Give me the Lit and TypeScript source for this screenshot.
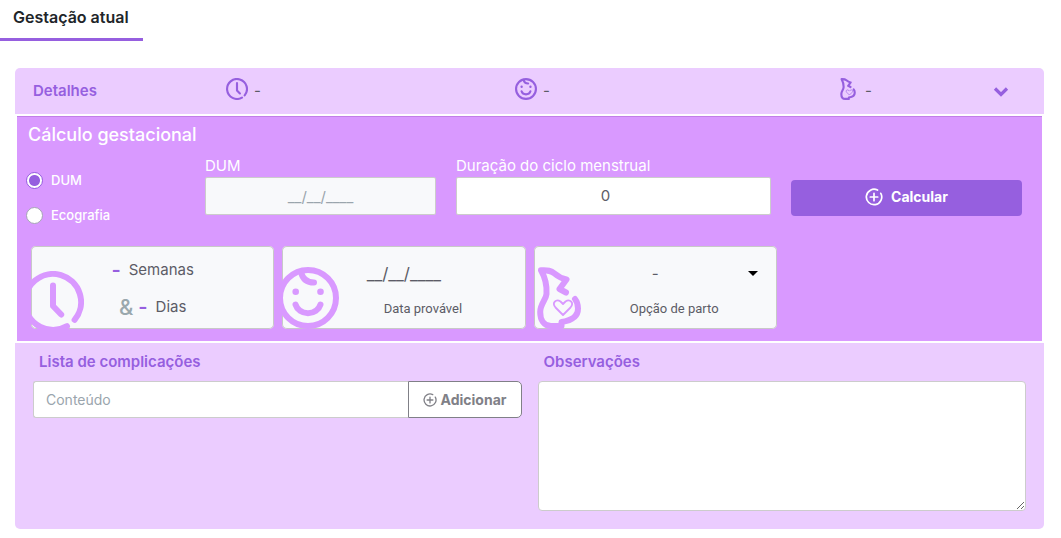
import { LitElement, html, css } from "lit";
import { customElement, state } from "lit/decorators.js";

const clockIcon = (cls: string) => html`<svg class=${cls} viewBox="0 0 62 62" aria-hidden="true">
  <g fill="none" stroke="currentColor" stroke-width="6" stroke-linecap="round" stroke-linejoin="round">
    <path d="M45 55.2A28 28 0 1 1 52.6 48.8" />
    <path d="M31 14.500V35L39.200 43.500" />
  </g>
</svg>`;

const babyIcon = (cls: string) => html`<svg class=${cls} viewBox="0 0 62 62" aria-hidden="true">
  <g fill="none" stroke="currentColor" stroke-width="6" stroke-linecap="round">
    <circle cx="31" cy="31" r="28" />
    <path d="M18.500 37.500a13 12 0 0 0 25 0" />
    <path d="M24 5C25.500 11.500 30 15.600 37 15.600" />
  </g>
  <circle cx="18.700" cy="24.700" r="3.300" fill="currentColor" />
  <circle cx="43.500" cy="24.700" r="3.300" fill="currentColor" />
</svg>`;

const bellyIcon = (cls: string) => html`<svg class=${cls} viewBox="0 0 44 62" aria-hidden="true">
  <g fill="none" stroke="currentColor" stroke-width="6" stroke-linecap="round" stroke-linejoin="round">
    <path d="M29 25.500L22.500 22L29.500 12.500C24 11.500 21 9.500 17.500 6.500C14 3.500 11 3 4 3.300C9 12 10 19 9.500 27C9 33 3.200 37 3.200 45C3.200 53 7 59 14 59H24.500V55C35 53.500 41 49 41 41.500C41 37.500 40 34.500 38 32" />
  </g>
  <path d="M26 48L18.500 40.500C14.500 36 19 31.500 23.500 34.500L26 37L28.500 34.500C33 31.500 37.500 36 33.500 40.500Z" fill="none" stroke="currentColor" stroke-width="1.800" stroke-linejoin="round" />
</svg>`;

const plusIcon = (cls: string) => html`<svg class=${cls} viewBox="0 0 18 18" aria-hidden="true">
  <path d="M15.800 5.300A7.700 7.700 0 1 1 12.500 2.100M9 5.300V12.700M5.300 9H12.700" fill="none" stroke="currentColor" stroke-width="1.700" stroke-linecap="round" />
</svg>`;

@customElement("app-root")
export class AppRoot extends LitElement {
  @state() private method = "dum";

  static styles = css`
    :host {
      display: block;
      font-family: Inter, "Liberation Sans", sans-serif;
      font-size: 15px;
      line-height: 20px;
      color: #5c5c66;
      background: #fff;
    }
    * { box-sizing: border-box; }
    input, select, button, textarea { font: inherit; color: inherit; margin: 0; }
    .tabs { display: flex; }
    .tab {
      padding: 7px 14px 11px 13px;
      border: 0;
      border-bottom: 3px solid #965fdf;
      background: none;
      color: #212529;
      font-size: 16px;
      font-weight: 600;
    }
    .panel { margin: 27px 17px 0 15px; }
    .summary {
      display: grid;
      grid-template-columns: 193fr 289fr 322fr 156fr 33fr;
      align-items: center;
      height: 46px;
      padding: 0 18px;
      background: #ebccff;
      border-radius: 5px 5px 0 0;
    }
    .heading { margin: 0; font-size: 15px; font-weight: 600; color: #965fdf; }
    .stat { display: flex; align-items: center; gap: 6px; }
    .stat-icon { width: 22px; height: 22px; color: #965fdf; margin-bottom: 4px; }
    .toggle { display: flex; padding: 0; border: 0; background: none; color: #965fdf; }
    .chevron { width: 16px; height: 11px; }
    .calc {
      margin: 2px;
      padding: 8px 13px 12px 9px;
      background: #d999ff;
      border-top: 1px solid #c17fe8;
      color: #fff;
    }
    .title { margin: 0 2px; font-size: 18px; font-weight: 500; }
    .form {
      display: grid;
      grid-template-columns: 159fr 231fr 315fr 231fr;
      gap: 20px;
      margin: 11px 7px 0 0;
    }
    .methods { display: flex; flex-direction: column; gap: 15px; padding-top: 14px; }
    .method { display: flex; align-items: center; gap: 8px; font-size: 13px; font-weight: 500; }
    .radio {
      appearance: none;
      width: 17px;
      height: 17px;
      border: 1px solid #a5a5b5;
      border-radius: 50%;
      background: #fff;
    }
    .radio:checked { border-color: #965fdf; background: radial-gradient(circle, #965fdf 5px, #fff 6px); }
    .field { display: flex; flex-direction: column; gap: 1px; min-width: 0; }
    .input {
      width: 100%;
      height: 38px;
      padding: 0 12px;
      border: 1px solid #ccc;
      border-radius: 2px;
      background: #fff;
      color: #5c5c66;
      outline: 0;
    }
    .centered { text-align: center; }
    .cycle { padding: 0 28px 2px 12px; }
    .input:disabled { background: #f8f9fb; }
    .input::placeholder { color: #9aa5ad; opacity: 1; }
    .submit {
      display: flex;
      align-items: center;
      justify-content: center;
      gap: 8px;
      height: 36px;
      margin-top: 24px;
      padding: 0 6px 2px;
      border: 0;
      border-radius: 4px;
      background: #965fdf;
      font-size: 14px;
      font-weight: 700;
    }
    .submit-icon { width: 18px; height: 18px; }
    .cards { display: grid; grid-template-columns: repeat(4, 1fr); gap: 8px; margin: 21px 1px 0 5px; }
    .card {
      position: relative;
      display: flex;
      flex-direction: column;
      align-items: center;
      height: 83px;
      padding-top: 14px;
      border-radius: 5px;
      background: #f8f9fb;
      box-shadow: inset 0 0 0 1px #c8c8c8;
      overflow: hidden;
      color: #5c5c66;
    }
    .art { position: absolute; color: #d999ff; }
    .art-clock { width: 62px; left: -9px; top: 25px; }
    .art-baby { width: 62px; left: -5px; top: 21px; }
    .art-belly { width: 44px; left: 3px; top: 21px; }
    .line { display: flex; align-items: center; gap: 8px; height: 20px; }
    .line-days { margin-top: 17px; gap: 5px; }
    .unit { padding-left: 3px; }
    .value { font-size: 20px; font-weight: 600; color: #965fdf; }
    .amp { font-size: 22px; font-weight: 500; color: #9aa8ad; }
    .plain {
      position: relative;
      width: 100%;
      height: 28px;
      padding: 0;
      border: 0;
      background: none;
      text-align: center;
      text-align-last: center;
      appearance: none;
      outline: 0;
    }
    .date { font-size: 17px; }
    .date::placeholder { color: #5c5c66; opacity: 1; }
    .caption {
      padding-left: 38px;
      margin-top: 11px;
      font-family: Roboto, sans-serif;
      font-size: 13px;
    }
    .arrow { position: absolute; right: 19px; top: 25px; width: 10px; height: 5px; fill: #000; }
    .notes {
      display: grid;
      grid-template-columns: 1fr 1fr;
      gap: 16px;
      padding: 9px 18px 18px;
      background: #ebccff;
      border-radius: 0 0 5px 5px;
    }
    .note-label { display: block; margin: 0 6px 9px; font-weight: 600; color: #965fdf; }
    .group { display: flex; }
    .content { flex: 1; min-width: 0; height: 37px; border-right: 0; font-size: 14px; border-radius: 3px 0 0 3px; }
    .add {
      display: flex;
      align-items: center;
      justify-content: center;
      gap: 4px;
      padding: 0 14px;
      height: 37px;
      border: 1px solid #808087;
      border-radius: 0 5px 5px 0;
      background: #fff;
      color: #808087;
      font-size: 14px;
      font-weight: 700;
    }
    .add-icon { width: 14px; height: 14px; }
    .area {
      display: block;
      width: 100%;
      height: 130px;
      padding: 8px 12px;
      border: 1px solid #ccc;
      border-radius: 4px;
      background: #fff;
      outline: 0;
    }
  `;

  private renderMethod(id: string, label: string) {
    return html`<label class="method">
      <input class="radio" type="radio" name="method" .checked=${this.method === id} @change=${() => (this.method = id)} />
      ${label}
    </label>`;
  }

  render() {
    return html`
      <nav class="tabs"><button class="tab">Gestação atual</button></nav>
      <main class="panel">
        <header class="summary">
          <h2 class="heading">Detalhes</h2>
          <div class="stat">${clockIcon("stat-icon")}<span>-</span></div>
          <div class="stat">${babyIcon("stat-icon")}<span>-</span></div>
          <div class="stat">${bellyIcon("stat-icon")}<span>-</span></div>
          <button class="toggle" aria-label="Detalhes">
            <svg class="chevron" viewBox="0 0 16 11"><path d="M2 2.500L8 8.500L14 2.500" fill="none" stroke="currentColor" stroke-width="3.200" /></svg>
          </button>
        </header>
        <section class="calc">
          <h3 class="title">Cálculo gestacional</h3>
          <div class="form">
            <div class="methods">${this.renderMethod("dum", "DUM")}${this.renderMethod("eco", "Ecografia")}</div>
            <div class="field">
              <label for="dum">DUM</label>
              <input id="dum" class="input centered" placeholder="__/__/____" disabled />
            </div>
            <div class="field">
              <label for="cycle">Duração do ciclo menstrual</label>
              <input id="cycle" class="input centered cycle" value="0" inputmode="numeric" />
            </div>
            <button class="submit">${plusIcon("submit-icon")}Calcular</button>
          </div>
          <div class="cards">
            <div class="card">
              ${clockIcon("art art-clock")}
              <div class="line"><span class="value">-</span><span>Semanas</span></div>
              <div class="line line-days"><span class="amp">&amp;</span><span class="value">-</span><span class="unit">Dias</span></div>
            </div>
            <div class="card">
              ${babyIcon("art art-baby")}
              <input id="due" class="plain date" placeholder="__/__/____" />
              <label class="caption" for="due">Data provável</label>
            </div>
            <div class="card">
              ${bellyIcon("art art-belly")}
              <select id="delivery" class="plain"><option>-</option></select>
              <svg class="arrow" viewBox="0 0 10 5" aria-hidden="true"><path d="M0 0H10L5 5Z" /></svg>
              <label class="caption" for="delivery">Opção de parto</label>
            </div>
          </div>
        </section>
        <section class="notes">
          <div>
            <label class="note-label" for="item">Lista de complicações</label>
            <div class="group">
              <input id="item" class="input content" placeholder="Conteúdo" />
              <button class="add">${plusIcon("add-icon")}Adicionar</button>
            </div>
          </div>
          <div>
            <label class="note-label" for="obs">Observações</label>
            <textarea id="obs" class="area"></textarea>
          </div>
        </section>
      </main>
    `;
  }
}
